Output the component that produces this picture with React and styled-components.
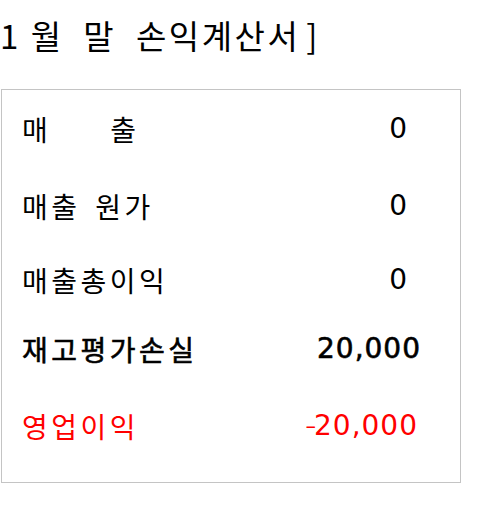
import React from "react";
import styled, { createGlobalStyle } from "styled-components";

const Global = createGlobalStyle`
  html, body { margin: 0; padding: 0; background: #fff; }
  body { font-family: "Noto Sans CJK KR", "Noto Sans", sans-serif; color: #000; }
`;

const Page = styled.div`
  padding: 0 0 0 1px;
`;

const Title = styled.h1`
  margin: 0 0 0 -1px;
  height: 89px;
  padding-top: 12px;
  box-sizing: border-box;
  font-size: 33px;
  font-weight: 400;
  line-height: 46px;
  letter-spacing: 2.5px;
  white-space: pre;
`;

const Bracket = styled.span`
  margin-left: 6px;
`;

const Sheet = styled.section`
  width: 460px;
  height: 394px;
  box-sizing: border-box;
  border: 1px solid #c4c4c4;
  padding: 0 42px 0 20px;
  display: flex;
  flex-direction: column;
`;

const Row = styled.div`
  height: ${(p) => p.$h}px;
  display: flex;
  align-items: center;
  justify-content: space-between;
  font-size: 28px;
  line-height: 1;
  color: ${(p) => (p.$red ? "#ff0000" : "#000")};
  -webkit-text-stroke: ${(p) => (p.$bold ? "0.6px currentColor" : "0")};
`;

const Label = styled.span`
  white-space: pre;
  letter-spacing: 3.5px;
  word-spacing: 5px;
`;

const Value = styled.span`
  font-family: "DejaVu Sans", "Noto Sans", sans-serif;
  font-size: 28px;
  white-space: pre;
  letter-spacing: 1px;
  margin-right: ${(p) => p.$mr ?? 0}px;
`;

const Minus = styled.span`
  font-size: 21px;
  letter-spacing: 0;
  vertical-align: 2px;
  margin-right: -2px;
`;

export default function App() {
  return (
    <Page>
      <Global />
      <Title>
        {"1 월  말  손익계산서"}
        <Bracket>]</Bracket>
      </Title>
      <Sheet>
        <Row $h={78}>
          <Label>{"매    출"}</Label>
          <Value $mr={10}>0</Value>
        </Row>
        <Row $h={76}>
          <Label>매출 원가</Label>
          <Value $mr={10}>0</Value>
        </Row>
        <Row $h={72}>
          <Label>매출총이익</Label>
          <Value $mr={10}>0</Value>
        </Row>
        <Row $h={66} $bold>
          <Label>재고평가손실</Label>
          <Value $mr={-3}>20,000</Value>
        </Row>
        <Row $h={88} $red>
          <Label>영업이익</Label>
          <Value $mr={0}>
            <Minus>–</Minus>20,000
          </Value>
        </Row>
      </Sheet>
    </Page>
  );
}
